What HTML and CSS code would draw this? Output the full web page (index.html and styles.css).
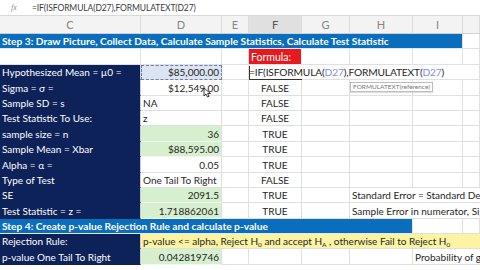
FILE: index.html
```html
<!DOCTYPE html>
<html>
<head>
<meta charset="utf-8">
<link rel="stylesheet" href="styles.css">
</head>
<body>
<div class="fbar"><span class="fx">fx</span><span class="ftext">=IF(ISFORMULA(D27),FORMULATEXT(D27)</span></div>
<div class="sheet">
  <div class="h">C</div><div class="h">D</div><div class="h">E</div><div class="h sel">F</div><div class="h">G</div><div class="h">H</div><div class="h">I</div><div class="h"></div>

  <div class="c band s3">Step 3: Draw Picture, Collect Data, Calculate Sample Statistics, Calculate Test Statistic</div><div class="c"></div>

  <div class="c"></div><div class="c"></div><div class="c"></div><div class="c red">Formula:</div><div class="c"></div><div class="c"></div><div class="c"></div><div class="c"></div>

  <div class="c nv">Hypothesized Mean = µ0 =</div><div class="c r ref">$85,000.00</div><div class="c"></div><div class="c edit">=IF(ISFORMULA(<span class="rf">D27</span>),FORMULATEXT(<span class="rf">D27</span>)</div><div class="c"></div>

  <div class="c nv">Sigma = σ =</div><div class="c r">$12,549.00</div><div class="c"></div><div class="c m">FALSE</div><div class="c"></div><div class="c"></div><div class="c"></div><div class="c"></div>

  <div class="c nv">Sample SD = s</div><div class="c">NA</div><div class="c"></div><div class="c m">FALSE</div><div class="c"></div><div class="c"></div><div class="c"></div><div class="c"></div>

  <div class="c nv">Test Statistic To Use:</div><div class="c">z</div><div class="c"></div><div class="c m">FALSE</div><div class="c"></div><div class="c"></div><div class="c"></div><div class="c"></div>

  <div class="c nv">sample size = n</div><div class="c r g">36</div><div class="c"></div><div class="c m">TRUE</div><div class="c"></div><div class="c"></div><div class="c"></div><div class="c"></div>

  <div class="c nv">Sample Mean = Xbar</div><div class="c r g">$88,595.00</div><div class="c"></div><div class="c m">TRUE</div><div class="c"></div><div class="c"></div><div class="c"></div><div class="c"></div>

  <div class="c nv">Alpha = α =</div><div class="c r">0.05</div><div class="c"></div><div class="c m">TRUE</div><div class="c"></div><div class="c"></div><div class="c"></div><div class="c"></div>

  <div class="c nv">Type of Test</div><div class="c">One Tail To Right</div><div class="c"></div><div class="c m">FALSE</div><div class="c"></div><div class="c"></div><div class="c"></div><div class="c"></div>

  <div class="c nv">SE</div><div class="c r g">2091.5</div><div class="c"></div><div class="c m">TRUE</div><div class="c"></div><div class="c wide">Standard Error = Standard Deviation of Sample Means</div>

  <div class="c nv">Test Statistic = z =</div><div class="c r g">1.718862061</div><div class="c"></div><div class="c m">TRUE</div><div class="c"></div><div class="c wide">Sample Error in numerator, Sigma in denominator</div>

  <div class="c band s4">Step 4: Create p-value Rejection Rule and calculate p-value</div><div class="c"></div><div class="c"></div>

  <div class="c nv">Rejection Rule:</div><div class="c yel"><span>p-value &lt;= alpha, Reject H<sub>0</sub> and accept H<sub>A</sub> , otherwise Fail to Reject H<sub>0</sub></span></div>

  <div class="c nv">p-value One Tail To Right</div><div class="c r g">0.042819746</div><div class="c"></div><div class="c"></div><div class="c"></div><div class="c"></div><div class="c prob">Probability of getting</div>
</div>
<div class="tip">FORMULATEXT(reference)</div>
<svg class="cursor" width="9" height="11" viewBox="0 0 9 11"><path d="M1 1 L1 9 L3 7 L4.5 10 L6 9.3 L4.6 6.5 L7.5 6.5 Z" fill="#fff" stroke="#222" stroke-width="0.9" stroke-linejoin="round"/></svg>
</body>
</html>
```
FILE: styles.css
```css
html, body {
  margin: 0;
  padding: 0;
}
body {
  width: 480px;
  height: 270px;
  overflow: hidden;
  position: relative;
  background: #fff;
  font-family: "Lato", "Open Sans", sans-serif;
  color: #262626;
}
.fbar {
  display: flex;
  align-items: center;
  height: 15px;
  border-bottom: 1px solid #d9d9d9;
  font-size: 8.5px;
  color: #3a3a3a;
}
.fx {
  width: 28px;
  text-align: center;
  font-style: italic;
  font-family: "Liberation Serif", serif;
  color: #8a8a8a;
  font-size: 8px;
}
.ftext {
  padding-left: 4px;
  letter-spacing: -0.1px;
}
.sheet {
  display: grid;
  grid-template-columns: 141px 81px 27px 53px 48px 63px 50px 1fr;
  grid-template-rows: 18px repeat(15, 15.4px);
}
.h {
  background: #f3f3f3;
  border-right: 1px solid #dcdcdc;
  border-bottom: 1px solid #d0d0d0;
  box-sizing: border-box;
  display: flex;
  align-items: center;
  justify-content: center;
  font-size: 11px;
  color: #858585;
}
.h.sel {
  background: #e0e0e0;
  color: #555;
}
.c {
  box-sizing: border-box;
  border-right: 1px solid #e0e0e0;
  border-bottom: 1px solid #e0e0e0;
  font-size: 10px;
  line-height: 13px;
  padding: 0 2px;
  white-space: nowrap;
  overflow: hidden;
  display: flex;
  align-items: flex-end;
  min-width: 0;
}
.r {
  justify-content: flex-end;
}
.m {
  justify-content: center;
}
.nv {
  background: #0d2259;
  color: #fff;
  border-bottom-color: #0d2259;
  border-right-color: #c9cdd6;
}
.g {
  background: #d6efce;
  border-bottom-color: #f1f8ee;
}
.ref {
  background: #dbe4f3;
  border: 1px dashed #6e7f9c;
}
.band {
  background: #0a6ebd;
  color: #fff;
  font-weight: 700;
  font-size: 10.2px;
  border-bottom-color: #dfe9f3;
  border-right-color: #dfe9f3;
}
.s3 {
  grid-column: 1 / 8;
}
.s4 {
  grid-column: 1 / 7;
}
.red {
  background: #e8191e;
  color: #fff;
  font-size: 10.5px;
  border-right-color: #fff;
}
.edit {
  grid-column: 4 / 8;
  position: relative;
  overflow: visible;
  background: #fff;
  font-size: 10.2px;
  letter-spacing: -0.15px;
  color: #1e1e1e;
  padding-left: 0;
  border-right: none;
}
.edit::before {
  content: "";
  position: absolute;
  left: 0;
  top: 1px;
  width: 52px;
  bottom: -1px;
  border-left: 1px solid #333;
  border-bottom: 1px solid #333;
}
.rf {
  color: #7f8fe6;
}
.wide {
  grid-column: 6 / 9;
  border-right: none;
}
.yel {
  grid-column: 2 / 9;
  background: #fcf4a2;
  border-right: none;
}
.yel sub {
  font-size: 6.5px;
  line-height: 0;
  vertical-align: -2px;
}
.prob {
  grid-column: 7 / 9;
  border-right: none;
}
.tip {
  position: absolute;
  left: 350px;
  top: 82px;
  height: 8px;
  padding: 0 2px;
  border: 1px solid #bdbdbd;
  background: #fff;
  font-size: 6.5px;
  line-height: 8px;
  color: #777;
  box-shadow: 0 1px 1px rgba(0,0,0,0.12);
}
.cursor {
  position: absolute;
  left: 203px;
  top: 87px;
}
```
